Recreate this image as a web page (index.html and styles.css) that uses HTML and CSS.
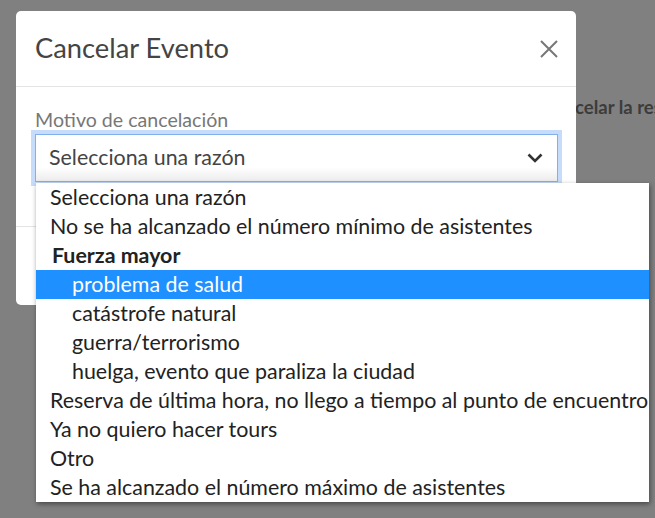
FILE: index.html
```html
<!DOCTYPE html>
<html lang="es">
<head>
    <meta charset="UTF-8">
    <meta name="viewport" content="width=device-width, initial-scale=1.0">
    <title>Cancelar Evento</title>
    <link rel="stylesheet" href="styles.css">
</head>
<body>
    <div class="page">
        <p class="page-note">Vas a cancelar la reserva</p>
    </div>

    <div class="modal">
        <div class="modal-header">
            <h2>Cancelar Evento</h2>
            <button class="close" aria-label="Cerrar">
                <svg width="18" height="18" viewBox="0 0 18 18">
                    <path d="M1 1 L17 17 M17 1 L1 17" stroke="#777" stroke-width="2" fill="none"/>
                </svg>
            </button>
        </div>
        <div class="modal-body">
            <label for="motivo">Motivo de cancelación</label>
            <div class="select">
                <span>Selecciona una razón</span>
                <svg width="16" height="10" viewBox="0 0 16 10">
                    <path d="M1.5 1.5 L8 8 L14.5 1.5" stroke="#333" stroke-width="2.6" fill="none"/>
                </svg>
            </div>
        </div>
        <div class="modal-footer"></div>
    </div>

    <!-- open dropdown of the select -->
    <ul class="dropdown">
        <li>Selecciona una razón</li>
        <li>No se ha alcanzado el número mínimo de asistentes</li>
        <li class="group">Fuerza mayor</li>
        <li class="sub active">problema de salud</li>
        <li class="sub">catástrofe natural</li>
        <li class="sub">guerra/terrorismo</li>
        <li class="sub">huelga, evento que paraliza la ciudad</li>
        <li>Reserva de última hora, no llego a tiempo al punto de encuentro</li>
        <li>Ya no quiero hacer tours</li>
        <li>Otro</li>
        <li>Se ha alcanzado el número máximo de asistentes</li>
    </ul>
</body>
</html>
```

FILE: styles.css
```css
body {
    font-family: Lato, "Open Sans", sans-serif;
    margin: 0;
    background-color: #808080;
    height: 518px;
    overflow: hidden;
}
.page {
    padding-top: 96px;
    overflow: hidden;
}
.page-note {
    margin: 0 0 0 499px;
    white-space: nowrap;
    font-size: 18.5px;
    font-weight: bold;
    color: #3c3c3c;
}
.modal {
    position: absolute;
    left: 16px;
    top: 11px;
    width: 560px;
    height: 294px;
    background-color: #fff;
    border-radius: 5px;
    display: flex;
    flex-direction: column;
}
.modal-header {
    height: 76px;
    box-sizing: border-box;
    border-bottom: 1px solid #e3e3e3;
    display: flex;
    align-items: center;
    justify-content: space-between;
    padding: 0 18px 3px 19px;
}
.close {
    background: none;
    border: none;
    padding: 0;
    margin-top: 3px;
    display: flex;
}
.modal-header h2 {
    margin: 0;
    font-size: 27.3px;
    font-weight: normal;
    color: #444;
}
.modal-body {
    height: 140px;
    padding: 21px 18px 0 19px;
    box-sizing: border-box;
    border-bottom: 1px solid #e3e3e3;
}
.modal-body label {
    display: block;
    font-size: 19.6px;
    color: #777;
    height: 26px;
}
.select {
    height: 48px;
    box-sizing: border-box;
    border: 1px solid #80b1ee;
    box-shadow: 0 0 0 4px #c6dcfa;
    display: flex;
    align-items: center;
    justify-content: space-between;
    padding: 0 14px 2px 13px;
    font-size: 21.4px;
    color: #444;
    background: linear-gradient(#fff 70%, #ececec);
}
.select svg {
    margin-top: 2px;
}
.dropdown {
    position: absolute;
    left: 36px;
    top: 183px;
    width: 613px;
    margin: 0;
    padding: 0;
    list-style: none;
    background-color: #fff;
    box-shadow: 1px 2px 5px rgba(0,0,0,0.45);
    font-size: 21.4px;
    color: #222;
}
.dropdown li {
    height: 29px;
    line-height: 29px;
    padding-left: 14px;
    white-space: nowrap;
}
.dropdown .group {
    font-weight: bold;
    padding-left: 16px;
}
.dropdown .sub {
    padding-left: 36px;
}
.dropdown .active {
    background-color: #1e90ff;
    color: #fff;
}
```
